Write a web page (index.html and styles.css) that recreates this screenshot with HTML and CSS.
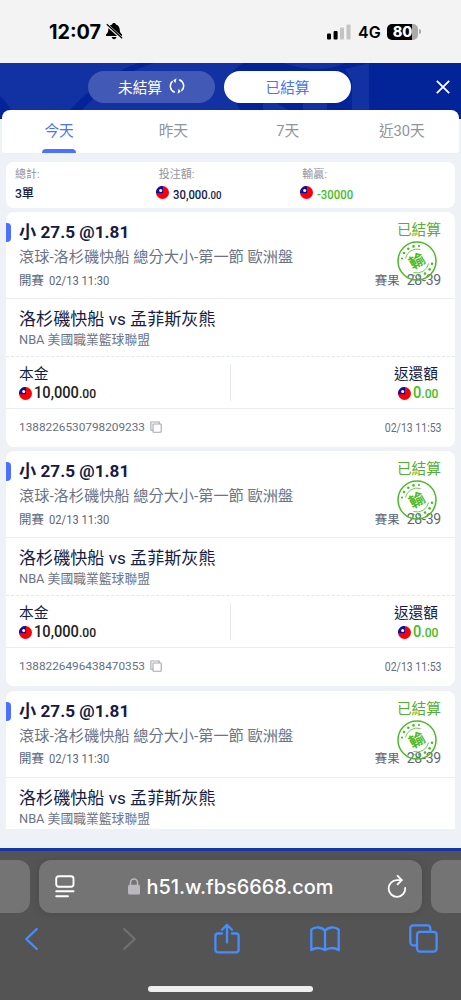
FILE: index.html
```
<!DOCTYPE html>
<html lang="zh-Hant">
<head>
    <meta charset="utf-8">
    <meta name="viewport" content="width=device-width,initial-scale=1">
    <title>已結算</title>
    <link rel="stylesheet" href="styles.css">
</head>
<body>
    <!-- shared icons -->
    <svg class="defs">
        <symbol id="flag" viewBox="0 0 13 13">
            <circle cx="6.5" cy="6.5" r="6.5" fill="#fb0007"/>
            <path d="M0 7.200A6.500 6.500 0 0 1 7 0v7.200z" fill="#10109b"/>
            <circle cx="4.700" cy="4.500" r="1.500" fill="#fff"/>
        </symbol>
        <symbol id="copy" viewBox="0 0 12 12">
            <path d="M3 9.200H.9V1h8.300v2" fill="none" stroke="#a4a8b0" stroke-width="1.100"/>
            <rect x="3" y="3" width="8.200" height="8.200" rx=".5" fill="none" stroke="#a4a8b0" stroke-width="1.100"/>
        </symbol>
        <symbol id="stamp" viewBox="0 0 40 40">
            <circle cx="20" cy="20" r="19" fill="none" stroke="#4cba29" stroke-width="1.500"/>
            <path d="M8.400 17.500A12 12 0 0 1 23.500 8.500M31.600 22.500A12 12 0 0 1 16.500 31.500" fill="none" stroke="#4cba29" stroke-width=".8"/>
            <g fill="#4cba29">
                <circle cx="5" cy="17.500" r="1.100"/><circle cx="7" cy="12" r="1.300"/><circle cx="11.300" cy="7.700" r="1.300"/><circle cx="16.500" cy="5.400" r="1.300"/><circle cx="22" cy="5" r="1.100"/>
                <circle cx="35" cy="22.800" r="1.300"/><circle cx="32.600" cy="28.400" r="1.300"/><circle cx="28" cy="32.600" r="1.300"/><circle cx="22.300" cy="34.600" r="1.300"/><circle cx="16.500" cy="34.500" r="1.100"/>
            </g>
            <text class="stamp-text" x="20" y="25.500" text-anchor="middle" transform="rotate(-30 20 20)">輸</text>
        </symbol>
    </svg>

    <div class="statusbar">
        <span class="clock">12:07</span>
        <svg class="mute" width="17" height="17" viewBox="0 0 17 17">
            <path d="M8 0C9 0 9.700.6 9.900 1.400 12.500 2.200 13.600 4 13.700 6.600c.1 2.500.8 3.600 2.100 4.700.7.600.4 1.700-.6 1.700H.9c-1 0-1.300-1.100-.6-1.700C1.600 10.200 2.200 9.100 2.300 6.600 2.400 4 3.500 2.200 6.100 1.400 6.300.6 7 0 8 0zM5.700 14h4.700c-.2 1.400-1.100 2.200-2.300 2.200S5.900 15.400 5.700 14z"/>
            <path d="M.6 1.500l15.400 14" stroke="#f3f3f3" stroke-width="3"/>
            <path d="M.8 1.300l15.400 14" stroke="#000" stroke-width="1.200"/>
        </svg>
        <svg class="signal" width="24" height="16" viewBox="0 0 24 16">
            <rect x="0" y="9.500" width="4" height="6" rx="1"/>
            <rect x="6.600" y="7" width="4" height="8.500" rx="1"/>
            <rect x="13" y="3.500" width="4" height="12" rx="1" fill="#c4c4c4"/>
            <rect x="19.500" y="0.500" width="4" height="15" rx="1" fill="#c4c4c4"/>
        </svg>
        <span class="net">4G</span>
        <span class="battery">80</span>
        <span class="battery-tip"></span>
    </div>

    <div class="topbar">
        <svg class="pattern" width="461" height="56" viewBox="0 0 461 56">
            <rect width="461" height="56" fill="#032498"/>
            <path d="M0 0h138Q100 14 70 47H11Q6 38 0 33z" fill="#1231a3"/>
            <path d="M154 0h90q-26 12-4 47H82Q114 12 154 0z" fill="#1231a3"/>
            <path d="M263 47V32l25 15zM303 47V32h24v15zM345 6l24-6v47h-17V18zM283 0h62q-25 12-62 0z" fill="#1231a3"/>
        </svg>
        <div class="pill">未結算
            <svg width="16" height="16" viewBox="0 0 16 16" fill="none" stroke="#fff" stroke-width="1.500">
                <path d="M5.800 14.300A6.600 6.600 0 0 1 3.600 3.100M10.200 1.700A6.600 6.600 0 0 1 12.400 12.900"/>
                <path d="M7.500 .3L4.300 2.200l2 3zM8.500 15.700l3.200-1.900-2-3z" fill="#fff" stroke="none"/>
            </svg>
        </div>
        <div class="pill active">已結算</div>
        <svg class="close" width="14" height="14" viewBox="0 0 14 14"><path d="M.8.8l12.400 12.400M13.200.8L.8 13.200" stroke="#fff" stroke-width="1.800"/></svg>
    </div>

    <div class="content">
        <div class="tabs">
            <div class="tab active">今天</div>
            <div class="tab">昨天</div>
            <div class="tab">7天</div>
            <div class="tab">近30天</div>
        </div>

        <div class="summary">
            <div class="sum-col">
                <div class="label">總計:</div>
                <div class="value">3單</div>
            </div>
            <div class="sum-col">
                <div class="label">投注額:</div>
                <div class="value shift"><svg class="flag"><use href="#flag"/></svg><span class="total">30,000<small>.00</small></span></div>
            </div>
            <div class="sum-col">
                <div class="label">輸贏:</div>
                <div class="value shift green"><svg class="flag"><use href="#flag"/></svg><span class="total">-30000</span></div>
            </div>
        </div>

        <div class="list">
            <div class="card">
                <div class="head">
                    <div class="pick">小 27.5 @1.81</div>
                    <div class="market">滾球-洛杉磯快船 總分大小-第一節 歐洲盤</div>
                    <div class="row start"><span>開賽 <b class="num">02/13 11:30</b></span><span>賽果 <b class="score">28-39</b></span></div>
                    <div class="state">已結算</div>
                    <svg class="stamp"><use href="#stamp"/></svg>
                </div>
                <div class="match">
                    <div class="teams">洛杉磯快船 vs 孟菲斯灰熊</div>
                    <div class="league">NBA 美國職業籃球聯盟</div>
                </div>
                <div class="money">
                    <div class="stake">
                        <div>本金</div>
                        <div class="amount"><svg class="flag"><use href="#flag"/></svg><span>10,000<small>.00</small></span></div>
                    </div>
                    <div class="payout">
                        <div>返還額</div>
                        <div class="amount green"><svg class="flag"><use href="#flag"/></svg><span>0<small>.00</small></span></div>
                    </div>
                </div>
                <div class="row foot"><span class="order">1388226530798209233<svg class="copy"><use href="#copy"/></svg></span><span class="date">02/13 11:53</span></div>
            </div>

            <div class="card">
                <div class="head">
                    <div class="pick">小 27.5 @1.81</div>
                    <div class="market">滾球-洛杉磯快船 總分大小-第一節 歐洲盤</div>
                    <div class="row start"><span>開賽 <b class="num">02/13 11:30</b></span><span>賽果 <b class="score">28-39</b></span></div>
                    <div class="state">已結算</div>
                    <svg class="stamp"><use href="#stamp"/></svg>
                </div>
                <div class="match">
                    <div class="teams">洛杉磯快船 vs 孟菲斯灰熊</div>
                    <div class="league">NBA 美國職業籃球聯盟</div>
                </div>
                <div class="money">
                    <div class="stake">
                        <div>本金</div>
                        <div class="amount"><svg class="flag"><use href="#flag"/></svg><span>10,000<small>.00</small></span></div>
                    </div>
                    <div class="payout">
                        <div>返還額</div>
                        <div class="amount green"><svg class="flag"><use href="#flag"/></svg><span>0<small>.00</small></span></div>
                    </div>
                </div>
                <div class="row foot"><span class="order">1388226496438470353<svg class="copy"><use href="#copy"/></svg></span><span class="date">02/13 11:53</span></div>
            </div>

            <div class="card">
                <div class="head">
                    <div class="pick">小 27.5 @1.81</div>
                    <div class="market">滾球-洛杉磯快船 總分大小-第一節 歐洲盤</div>
                    <div class="row start"><span>開賽 <b class="num">02/13 11:30</b></span><span>賽果 <b class="score">28-39</b></span></div>
                    <div class="state">已結算</div>
                    <svg class="stamp"><use href="#stamp"/></svg>
                </div>
                <div class="match last">
                    <div class="teams">洛杉磯快船 vs 孟菲斯灰熊</div>
                    <div class="league">NBA 美國職業籃球聯盟</div>
                </div>
            </div>
        </div>
    </div>

    <div class="browser">
        <div class="urls">
            <div class="side left"></div>
            <div class="url">
                <svg width="20" height="24" viewBox="0 0 20 24" fill="none" stroke="#fff" stroke-width="1.900" stroke-linecap="round">
                    <rect x="1.200" y="1.200" width="17.300" height="10.500" rx="2.500"/>
                    <path d="M1.200 16.300h17.300M1.200 21.300H13"/>
                </svg>
                <div class="host">
                    <svg width="12" height="17" viewBox="0 0 12 17"><rect y="6.800" width="12" height="9.800" rx="1.600" fill="#bab8be"/><path d="M2.500 7.500V4.600a3.500 3.500 0 0 1 7 0v2.900" fill="none" stroke="#bab8be" stroke-width="1.500"/></svg>
                    <span>h51.w.fbs6668.com</span>
                </div>
                <svg width="20" height="24" viewBox="0 0 20 24" fill="none" stroke="#fff" stroke-width="1.800" stroke-linecap="round" stroke-linejoin="round">
                    <path d="M18.200 13A8.300 8.300 0 1 1 10 5.200h4.500"/>
                    <path d="M10.600.8l4.200 4.400-4.200 4.200"/>
                </svg>
            </div>
            <div class="side right"></div>
        </div>
        <div class="tools">
            <svg width="15" height="24" viewBox="0 0 15 24"><path d="M12.800 2L2.300 12l10.500 10"/></svg>
            <svg class="off" width="15" height="24" viewBox="0 0 15 24"><path d="M2.200 2l10.500 10L2.200 22"/></svg>
            <svg width="26" height="31" viewBox="0 0 26 31"><path d="M8 10.500H4a2.600 2.600 0 0 0-2.600 2.600v13.700A2.600 2.600 0 0 0 4 29.400h18a2.600 2.600 0 0 0 2.600-2.600V13.100A2.600 2.600 0 0 0 22 10.500h-4M13 19.500V2M8 6.700l5-5 5 5"/></svg>
            <svg width="30" height="26" viewBox="0 0 30 26"><path d="M15 5C12.500.8 5 .3 1.300 3.700v20.500c4-3 10.500-2.800 13.700 0 3.200-2.800 9.700-3 13.700 0V3.700C25 .3 17.500.8 15 5zv19"/></svg>
            <svg width="29" height="29" viewBox="0 0 29 29"><rect x="8" y="7.800" width="19.600" height="19.800" rx="3"/><path d="M8 21.300H4.300a3 3 0 0 1-3-3v-14a3 3 0 0 1 3-3h14a3 3 0 0 1 3 3v3.500"/></svg>
        </div>
        <div class="homebar"></div>
    </div>
</body>
</html>
```
FILE: styles.css
```
* {
    box-sizing: border-box;
}

body {
    margin: 0;
    width: 461px;
    height: 1000px;
    overflow: hidden;
    display: flex;
    flex-direction: column;
    font-family: Roboto, "Noto Sans CJK TC", sans-serif;
    background: #eef2f6;
    color: #161c43;
}

svg {
    display: block;
    flex: none;
}

.defs {
    display: none;
}

.statusbar {
    height: 63px;
    flex: none;
    display: flex;
    align-items: center;
    padding-left: 49px;
    background: #f3f3f3;
    font-family: Inter, sans-serif;
    color: #000;
}

.clock {
    width: 57px;
    font-size: 19.8px;
    font-weight: 700;
}

.signal {
    margin-left: 204px;
}

.net {
    width: 29px;
    margin-left: 7px;
    font-size: 16px;
    font-weight: 600;
    white-space: nowrap;
}

.battery {
    width: 31px;
    height: 16px;
    border-radius: 5px;
    background: linear-gradient(90deg, #000 80%, #aaa 80%);
    color: #fff;
    font-size: 14.5px;
    font-weight: 800;
    line-height: 16px;
    text-align: center;
}

.battery-tip {
    width: 2px;
    height: 5px;
    margin-left: 1px;
    border-radius: 0 2px 2px 0;
    background: #aaa;
}

.topbar {
    position: relative;
    height: 47px;
    flex: none;
    display: flex;
    align-items: center;
    padding-left: 88px;
    gap: 9px;
}

.pattern {
    position: absolute;
    left: 0;
    top: 0;
}

.pill {
    position: relative;
    display: flex;
    align-items: center;
    justify-content: center;
    gap: 7px;
    width: 127px;
    height: 32px;
    margin-top: 1px;
    padding-bottom: 2px;
    border-radius: 16px;
    background: #4259b5;
    color: #fff;
    font-size: 14.7px;
}

.pill.active {
    background: #fff;
    color: #4c70ff;
}

.close {
    position: relative;
    margin-left: 76px;
}

.content {
    position: relative;
    height: 738px;
    flex: none;
}

.tabs {
    display: flex;
    height: 43px;
    margin: 0 2px;
    border-radius: 8px 8px 3px 3px;
    background: #fff;
}

.tab {
    display: flex;
    flex-direction: column;
    align-items: center;
    flex: 1;
    line-height: 43px;
    font-size: 14.7px;
    color: #8f939e;
}

.tab.active {
    color: #4c70ff;
}

.tab.active::after {
    content: "";
    width: 34px;
    height: 4px;
    margin-top: -4px;
    border-radius: 4px 4px 0 0;
    background: #4c70ff;
}

.summary {
    display: flex;
    height: 46px;
    margin: 9px 6px 0;
    padding: 4px 9px 0;
    border-radius: 8px;
    background: #fff;
}

.sum-col {
    width: 144px;
}

.label {
    line-height: 17px;
    font-size: 11px;
    color: #8f939e;
}

.value {
    display: flex;
    height: 20px;
    line-height: 23px;
    font-size: 12.2px;
    font-weight: 500;
    letter-spacing: -0.3px;
}

/* figures are set narrow */
.total,
.amount span,
.num,
.date {
    display: inline-block;
    letter-spacing: 0;
    transform: scaleX(0.84);
    transform-origin: 0 50%;
}

.total {
    font-size: 13.5px;
}

.total small {
    font-size: 11.5px;
}

.shift {
    margin-left: -3px;
}

.sum-col:last-child .shift {
    margin-left: -2px;
}

.flag {
    width: 13px;
    height: 13px;
    margin: 3px 4px 0 0;
}

.green {
    color: #45bd1c;
}

.list {
    height: 617px;
    margin: 4px 6px 0;
    overflow: hidden;
}

.card {
    height: 235px;
    margin-bottom: 4.3px;
    border-radius: 8px;
    background: #fff;
}

.head {
    position: relative;
    height: 87px;
    padding: 8px 14px 0 13px;
    border-bottom: 1px solid #e9edf4;
}

.head::before {
    content: "";
    position: absolute;
    left: 0;
    top: 11px;
    width: 5px;
    height: 19px;
    border-radius: 0 4px 4px 0;
    background: #4c70ff;
}

.pick {
    line-height: 25px;
    font-size: 17.2px;
    font-weight: 700;
}

.market {
    line-height: 25px;
    font-size: 15.2px;
    color: #6b7385;
}

.row {
    display: flex;
    justify-content: space-between;
    align-items: center;
}

.start {
    height: 20px;
    line-height: 20px;
    font-size: 12.4px;
    color: #5d6679;
}

.num {
    margin-left: 2px;
    font-size: 13.6px;
    font-weight: 400;
    transform: scaleX(0.82);
}

.score {
    margin-left: 4px;
    font-size: 14px;
    font-weight: 400;
    letter-spacing: -0.2px;
}

.state {
    position: absolute;
    right: 14px;
    top: 7px;
    line-height: 22px;
    font-size: 14.7px;
    color: #56ae33;
}

.stamp {
    position: absolute;
    right: 18px;
    top: 29px;
    width: 40px;
    height: 40px;
}

.stamp-text {
    font-family: "Noto Sans CJK TC", sans-serif;
    font-size: 15.5px;
    font-weight: 700;
    fill: #4cba29;
}

.match {
    height: 58px;
    padding: 9px 13px 0;
    border-bottom: 1px dashed #e4e7ef;
}

.match.last {
    border: 0;
}

.teams {
    line-height: 23px;
    font-size: 17.1px;
}

.league {
    line-height: 17px;
    font-size: 12.8px;
    color: #6b7385;
}

.money {
    display: flex;
    height: 52px;
    padding: 7px 17px 0 13px;
    border-bottom: 1px solid #e9edf4;
    line-height: 20px;
    font-size: 14.7px;
}

.stake {
    width: 212px;
    height: 37px;
    border-right: 1px solid #e4e9f2;
}

.payout {
    display: flex;
    flex-direction: column;
    align-items: flex-end;
    flex: 1;
}

.amount {
    display: flex;
    align-items: center;
    height: 18px;
    font-size: 16.3px;
    font-weight: 500;
    color: #222;
}

.amount span {
    transform: scaleX(0.9);
}

.amount.green {
    margin-right: -3px;
    color: #45bd1c;
}

.amount .flag {
    margin: 0 2px 0 0;
}

.amount small {
    font-size: 13.5px;
}

.foot {
    height: 36px;
    padding: 0 14px 0 13px;
    color: #666f82;
}

.order {
    display: flex;
    align-items: center;
    font-size: 11.8px;
}

.copy {
    width: 12px;
    height: 12px;
    margin-left: 5px;
}

.date {
    font-size: 12.5px;
    transform-origin: 100% 50%;
}

.browser {
    height: 152px;
    flex: none;
    border-top: 3px solid #1736a5;
    background: #545454;
}

.urls {
    display: flex;
    justify-content: space-between;
    height: 71px;
    padding-top: 9px;
}

.side {
    width: 30px;
    height: 53px;
    background: #747474;
}

.side.left {
    border-radius: 0 12px 12px 0;
}

.side.right {
    border-radius: 12px 0 0 12px;
}

.url {
    display: flex;
    align-items: center;
    justify-content: space-between;
    width: 383px;
    height: 53px;
    padding: 0 15px 0 16px;
    border-radius: 12px;
    background: #747474;
    box-shadow: 0 0 10px rgba(0, 0, 0, 0.12);
}

.host {
    display: flex;
    align-items: center;
    gap: 6px;
    font-family: Inter, sans-serif;
    font-size: 19.9px;
    font-weight: 500;
    color: #fff;
}

.tools {
    display: grid;
    grid-template-columns: repeat(5, 98px);
    align-items: center;
    justify-items: center;
    height: 33px;
    margin-left: -18px;
    fill: none;
    stroke: #458eff;
    stroke-width: 2.3;
    stroke-linecap: round;
    stroke-linejoin: round;
}

.tools .off {
    stroke: #707070;
}

.homebar {
    width: 165px;
    height: 6px;
    margin: 31px auto 0;
    border-radius: 3px;
    background: #eee;
}
```
